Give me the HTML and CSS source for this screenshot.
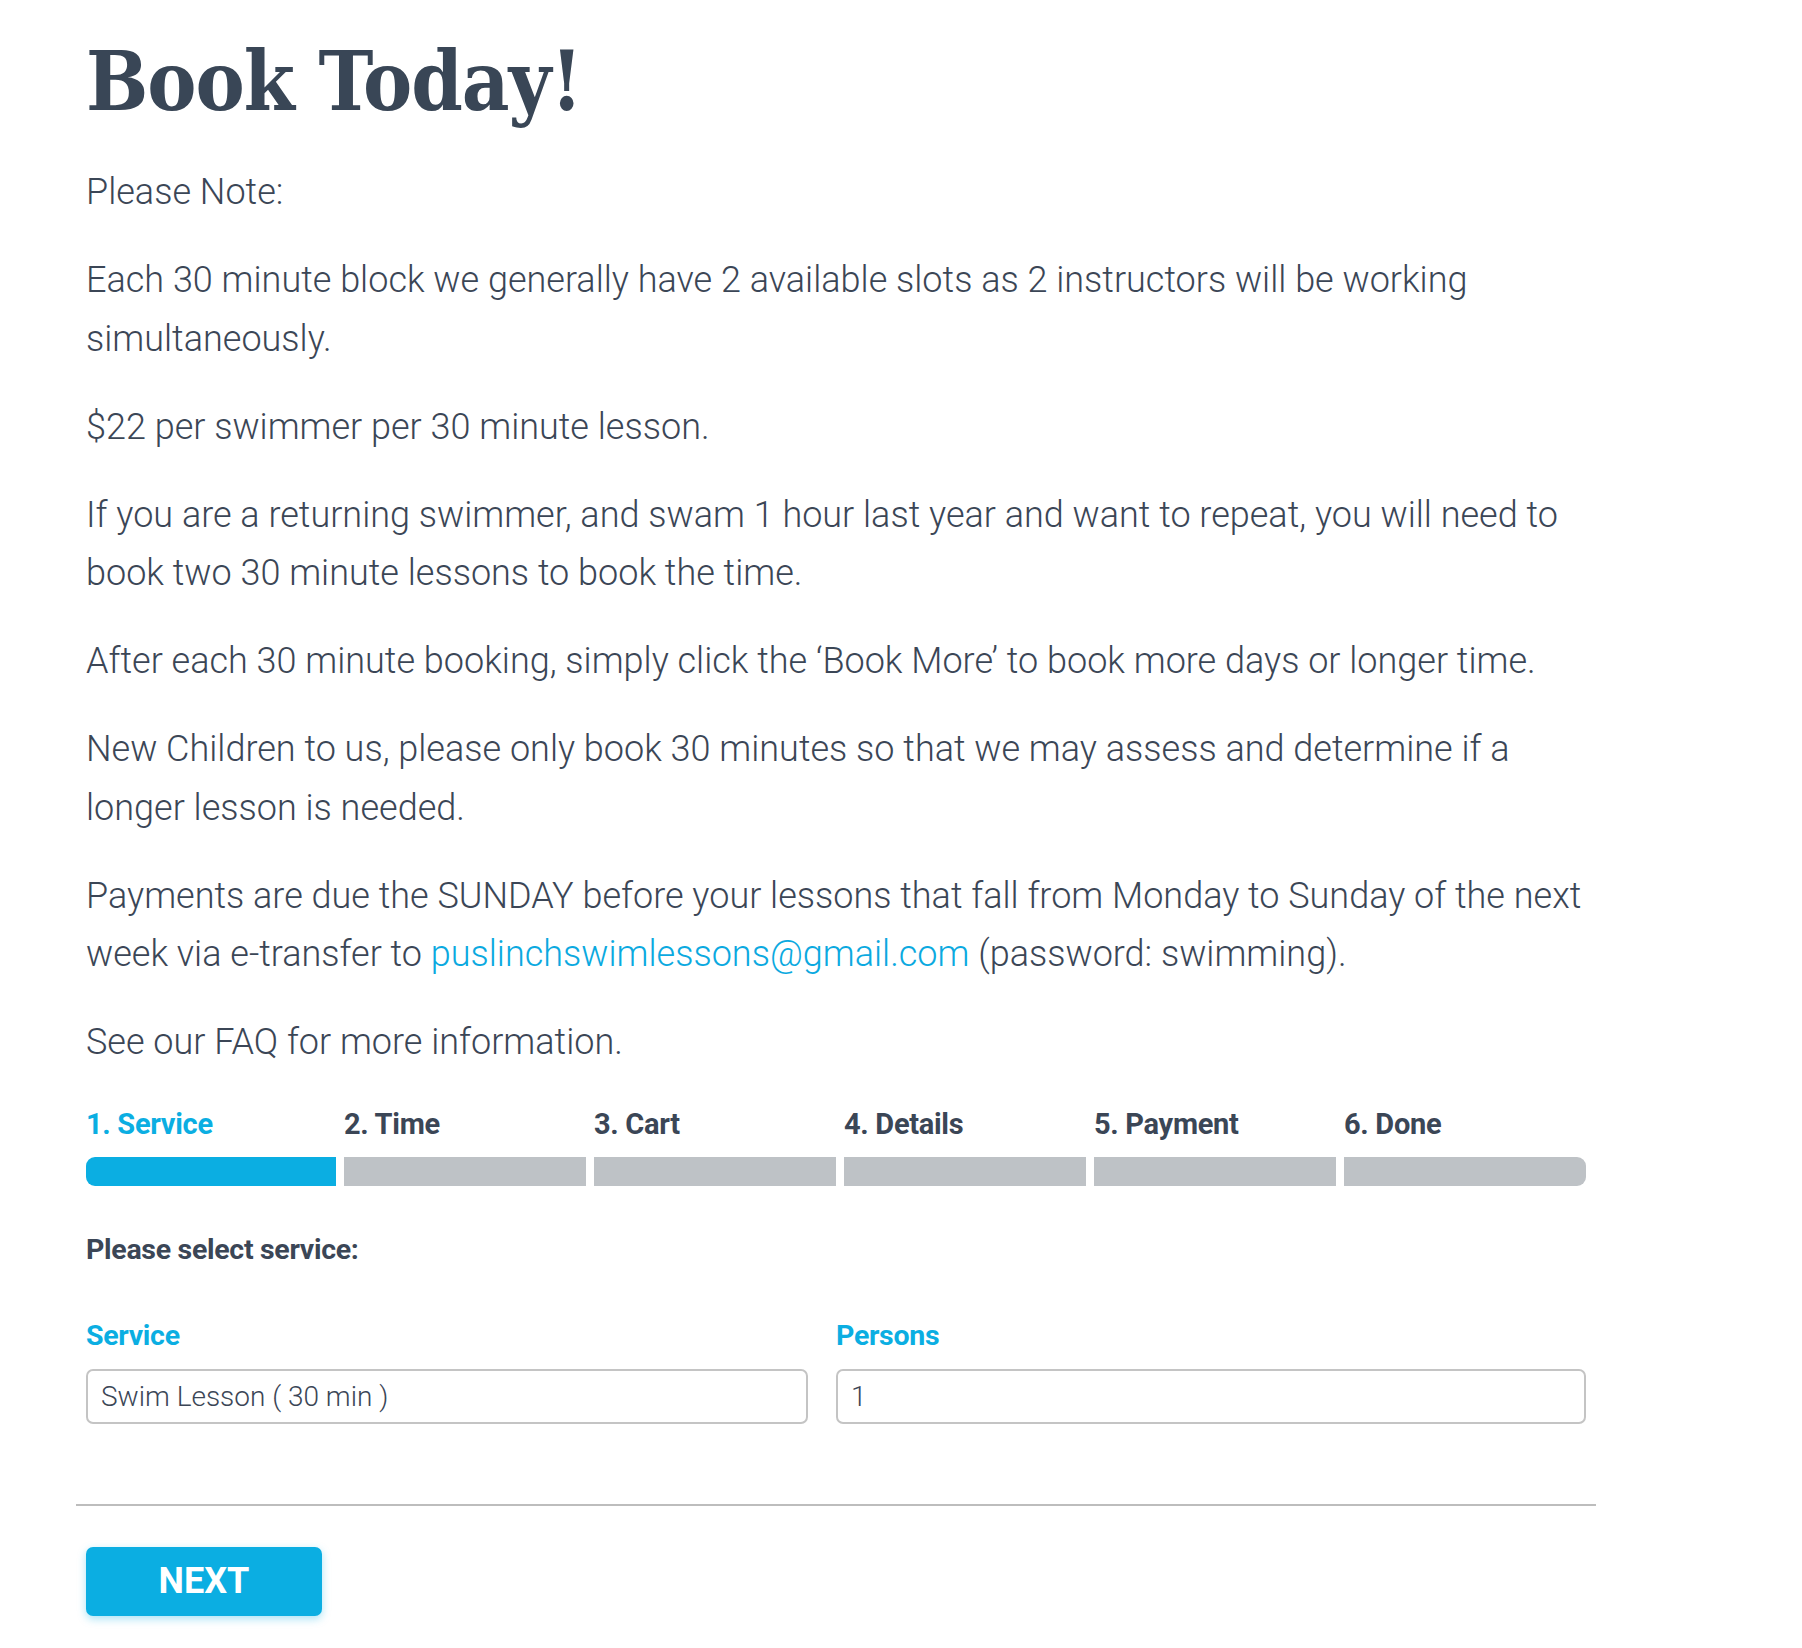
FILE: index.html
```html
<!DOCTYPE html>
<html lang="en">
<head>
<meta charset="utf-8">
<title>Book Today!</title>
<link rel="stylesheet" href="styles.css">
</head>
<body>
<main class="page">
  <h1 class="title">Book Today!</h1>
  <div class="notes">
    <p>Please Note:</p>
    <p>Each 30 minute block we generally have 2 available slots as 2 instructors will be working simultaneously.</p>
    <p>$22 per swimmer per 30 minute lesson.</p>
    <p>If you are a returning swimmer, and swam 1 hour last year and want to repeat, you will need to book two 30 minute lessons to book the time.</p>
    <p>After each 30 minute booking, simply click the ‘Book More’ to book more days or longer time.</p>
    <p>New Children to us, please only book 30 minutes so that we may assess and determine if a longer lesson is needed.</p>
    <p>Payments are due the SUNDAY before your lessons that fall from Monday to Sunday of the next week via e-transfer to <a class="link" href="#">puslinchswimlessons@gmail.com</a> (password: swimming).</p>
    <p>See our FAQ for more information.</p>
  </div>
  <section class="booking">
    <div class="steps">
      <div class="step step-active"><span class="step-label">1. Service</span><div class="step-bar"></div></div>
      <div class="step"><span class="step-label">2. Time</span><div class="step-bar"></div></div>
      <div class="step"><span class="step-label">3. Cart</span><div class="step-bar"></div></div>
      <div class="step"><span class="step-label">4. Details</span><div class="step-bar"></div></div>
      <div class="step"><span class="step-label">5. Payment</span><div class="step-bar"></div></div>
      <div class="step"><span class="step-label">6. Done</span><div class="step-bar"></div></div>
    </div>
    <p class="select-title">Please select service:</p>
    <div class="fields">
      <div class="field">
        <label class="field-label">Service</label>
        <div class="field-input">Swim Lesson ( 30 min )</div>
      </div>
      <div class="field">
        <label class="field-label">Persons</label>
        <div class="field-input">1</div>
      </div>
    </div>
    <hr class="divider">
    <button class="next-btn" type="button">NEXT</button>
  </section>
</main>
</body>
</html>
```

FILE: styles.css
```css
* { box-sizing: border-box; }
html, body { margin: 0; padding: 0; background: #ffffff; }
body {
  font-family: Roboto, "Noto Sans", sans-serif;
  color: #3b4656;
}
.page {
  width: 1500px;
  margin-left: 86px;
  padding-top: 31px;
  padding-bottom: 40px;
}
.title {
  margin: 0;
  font-family: "DejaVu Serif Condensed", "DejaVu Serif", serif;
  font-weight: 700;
  font-size: 82px;
  line-height: 100px;
  color: #394656;
  letter-spacing: -1px;
}
.notes { margin-top: 32px; }
.notes p {
  margin: 0 0 29.5px 0;
  font-size: 36px;
  font-weight: 300;
  line-height: 58.5px;
}
.link { color: #0ba9e0; text-decoration: none; }
.booking { margin-top: 35px; }
.steps {
  display: grid;
  grid-template-columns: 250fr repeat(5, 242fr);
  column-gap: 8px;
}
.step { display: flex; flex-direction: column; }
.step-label {
  font-size: 29px;
  font-weight: 700;
  line-height: 34px;
  color: #3b4656;
  letter-spacing: -0.3px;
}
.step-active .step-label { color: #0baee2; }
.step-bar {
  margin-top: 16px;
  height: 29px;
  background: #bec2c6;
}
.step-active .step-bar { background: #0baee2; }
.step:first-child .step-bar { border-radius: 9px 0 0 9px; }
.step:last-child .step-bar { border-radius: 0 9px 9px 0; }
.select-title {
  margin: 47px 0 0 0;
  font-size: 28.5px;
  font-weight: 700;
  line-height: 34px;
  letter-spacing: -0.3px;
}
.fields {
  margin-top: 52px;
  display: grid;
  grid-template-columns: 722fr 750fr;
  column-gap: 28px;
}
.field { display: flex; flex-direction: column; }
.field-label {
  font-size: 28.5px;
  font-weight: 700;
  line-height: 34px;
  color: #0baee2;
  letter-spacing: -0.3px;
}
.field-input {
  margin-top: 16px;
  height: 55px;
  border: 2px solid #c4c4c4;
  border-radius: 7px;
  padding: 0 13px;
  display: flex;
  align-items: center;
  font-size: 28px;
  font-weight: 300;
  color: #3b4656;
}
.divider {
  margin: 80px 0 0 -10px;
  width: 1520px;
  border: 0;
  border-top: 2px solid #bdbdbd;
  height: 0;
}
.next-btn {
  margin-top: 41px;
  width: 236px;
  height: 69px;
  border: 0;
  border-radius: 7px;
  background: #0baee2;
  color: #ffffff;
  font-family: Roboto, "Noto Sans", sans-serif;
  font-size: 36px;
  font-weight: 700;
  box-shadow: 0 3px 8px rgba(11, 174, 226, 0.35);
  cursor: pointer;
}
```
